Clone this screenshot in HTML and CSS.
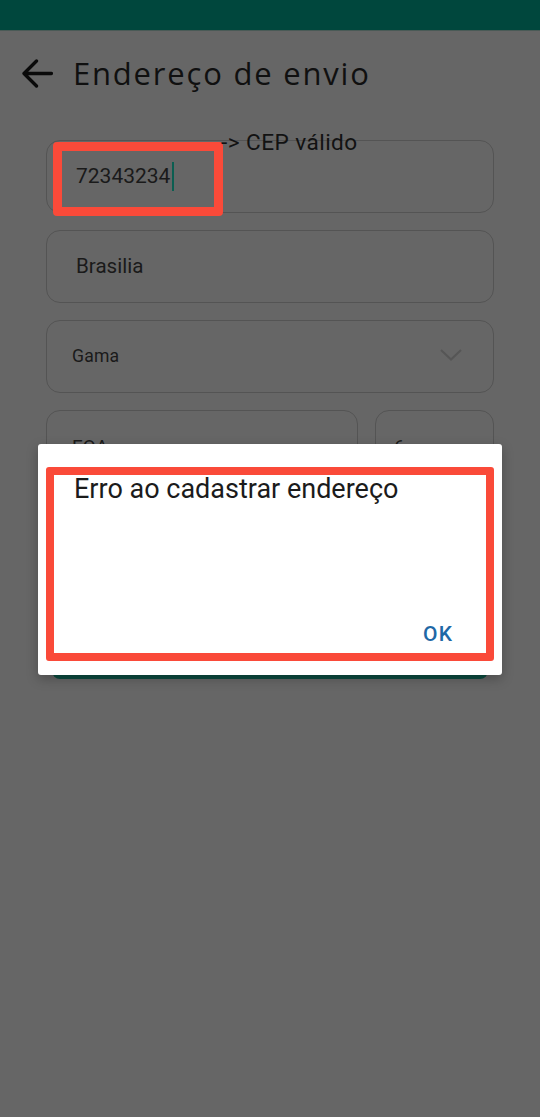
FILE: index.html
```html
<!DOCTYPE html>
<html lang="pt-BR">
<head>
<meta charset="utf-8">
<title>Endereço de envio</title>
<link rel="stylesheet" href="styles.css">
</head>
<body>
<div class="statusbar"></div>
<div class="screen">
  <header class="appbar">
    <svg class="back" width="32" height="30" viewBox="0 0 32 30" aria-hidden="true">
      <path d="M30.5 14.5H3 M15.5 2 L3 14.5 L15.5 27" fill="none" stroke="#0a0a0a" stroke-width="3.3" stroke-linecap="round" stroke-linejoin="round"/>
    </svg>
    <h1 class="title">Endereço de envio</h1>
  </header>

  <main class="form">
    <div class="field field-cep">
      <span class="value value-cep">72343234</span><span class="cursor"></span>
    </div>
    <div class="field">
      <span class="value value-city">Brasilia</span>
    </div>
    <div class="field field-select">
      <span class="value value-select">Gama</span>
      <svg class="chevron" width="24" height="14" viewBox="0 0 24 14" aria-hidden="true">
        <path d="M2 2 L12 11.5 L22 2" fill="none" stroke="#565656" stroke-width="2"/>
      </svg>
    </div>
    <div class="row">
      <div class="field field-grow"><span class="value value-small">EQA</span></div>
      <div class="field field-num"><span class="value value-small">6</span></div>
    </div>
    <div class="field"><span class="value value-small">Complemento</span></div>
    <button class="submit" type="button">Salvar</button>
  </main>

  <div class="note">-&gt; CEP válido</div>
  <div class="mark mark-cep"></div>

  <div class="dialog" role="alertdialog">
    <p class="dialog-msg">Erro ao cadastrar endereço</p>
    <div class="dialog-actions"><span class="dialog-ok">OK</span></div>
    <div class="mark mark-dialog"></div>
  </div>
</div>
</body>
</html>
```

FILE: styles.css
```css
* { box-sizing: border-box; }

html, body {
  margin: 0;
  padding: 0;
}

body {
  width: 540px;
  height: 1117px;
  background: #666666;
  font-family: Roboto, "Liberation Sans", sans-serif;
  overflow: hidden;
}

.statusbar {
  height: 31px;
  background: #00473d;
  border-bottom: 1.5px solid #4a5a56;
}

.screen {
  position: relative;
  height: 1086px;
}

.appbar {
  height: 86px;
  display: flex;
  align-items: center;
  padding-left: 21px;
  gap: 20px;
}

.back { display: block; flex: none; }

.title {
  margin: 0;
  font-family: "Open Sans", "Noto Sans", sans-serif;
  font-weight: 400;
  font-size: 31px;
  line-height: 1.2;
  letter-spacing: 1.8px;
  color: #101010;
}

.form {
  padding: 23px 46px 0 46px;
  display: flex;
  flex-direction: column;
  gap: 17px;
}

.field {
  height: 73px;
  border: 1.5px solid #545454;
  border-radius: 14px;
  display: flex;
  align-items: center;
  padding-left: 29px;
}

.value {
  color: #1a1a1a;
  line-height: 1;
}

.value-cep { font-size: 21px; }

.cursor {
  display: inline-block;
  width: 2.5px;
  height: 29px;
  margin-left: 1.5px;
  background: #0b5e51;
}

.value-city { font-size: 20.6px; }

.field-select {
  padding-left: 25px;
  padding-right: 30px;
  justify-content: space-between;
}

.value-select {
  font-size: 17.6px;
  letter-spacing: 0.2px;
}

.chevron { display: block; margin-top: -4px; }

.value-small { font-size: 19px; }

.row {
  display: flex;
  gap: 17px;
}

.field-grow { flex: 1; padding-left: 25px; }
.field-num { width: 119px; flex: none; padding-left: 18px; }

.submit {
  margin: 17px 6px 0;
  height: 72px;
  border: none;
  border-radius: 8px;
  background: #0c4c40;
  color: #5a5a5a;
  font-family: Roboto, sans-serif;
  font-size: 18px;
}

/* annotations drawn over the screenshot */
.note {
  position: absolute;
  left: 221px;
  top: 101px;
  font-family: Roboto, "Liberation Sans", sans-serif;
  font-size: 22.6px;
  letter-spacing: 0.45px;
  line-height: 1;
  color: #121212;
  z-index: 2;
}

.mark {
  position: absolute;
  border: 9.5px solid #fa4a39;
  border-radius: 4px;
  pointer-events: none;
}

.mark-cep {
  left: 53px;
  top: 111px;
  width: 170px;
  height: 74px;
  z-index: 1;
}

.dialog {
  position: absolute;
  left: 38px;
  top: 413px;
  width: 464px;
  height: 231px;
  background: #ffffff;
  border-radius: 3px;
  box-shadow: 0 4px 12px rgba(0, 0, 0, 0.25);
  display: flex;
  flex-direction: column;
  justify-content: space-between;
  padding: 30px 50px 28px 36px;
  z-index: 3;
}

.dialog-msg {
  margin: 0;
  font-family: Roboto, "Liberation Sans", sans-serif;
  font-size: 27px;
  line-height: 1.171;
  color: #1b1b1b;
}

.dialog-actions {
  display: flex;
  justify-content: flex-end;
}

.dialog-ok {
  font-family: Roboto, "Liberation Sans", sans-serif;
  font-weight: 500;
  font-size: 21px;
  line-height: 1.171;
  letter-spacing: 1.3px;
  margin-right: -1.3px;
  color: #1f68a6;
}

.mark-dialog {
  left: 8px;
  top: 23px;
  width: 448px;
  height: 194px;
  border-width: 8.5px;
  border-radius: 3px;
}
```
